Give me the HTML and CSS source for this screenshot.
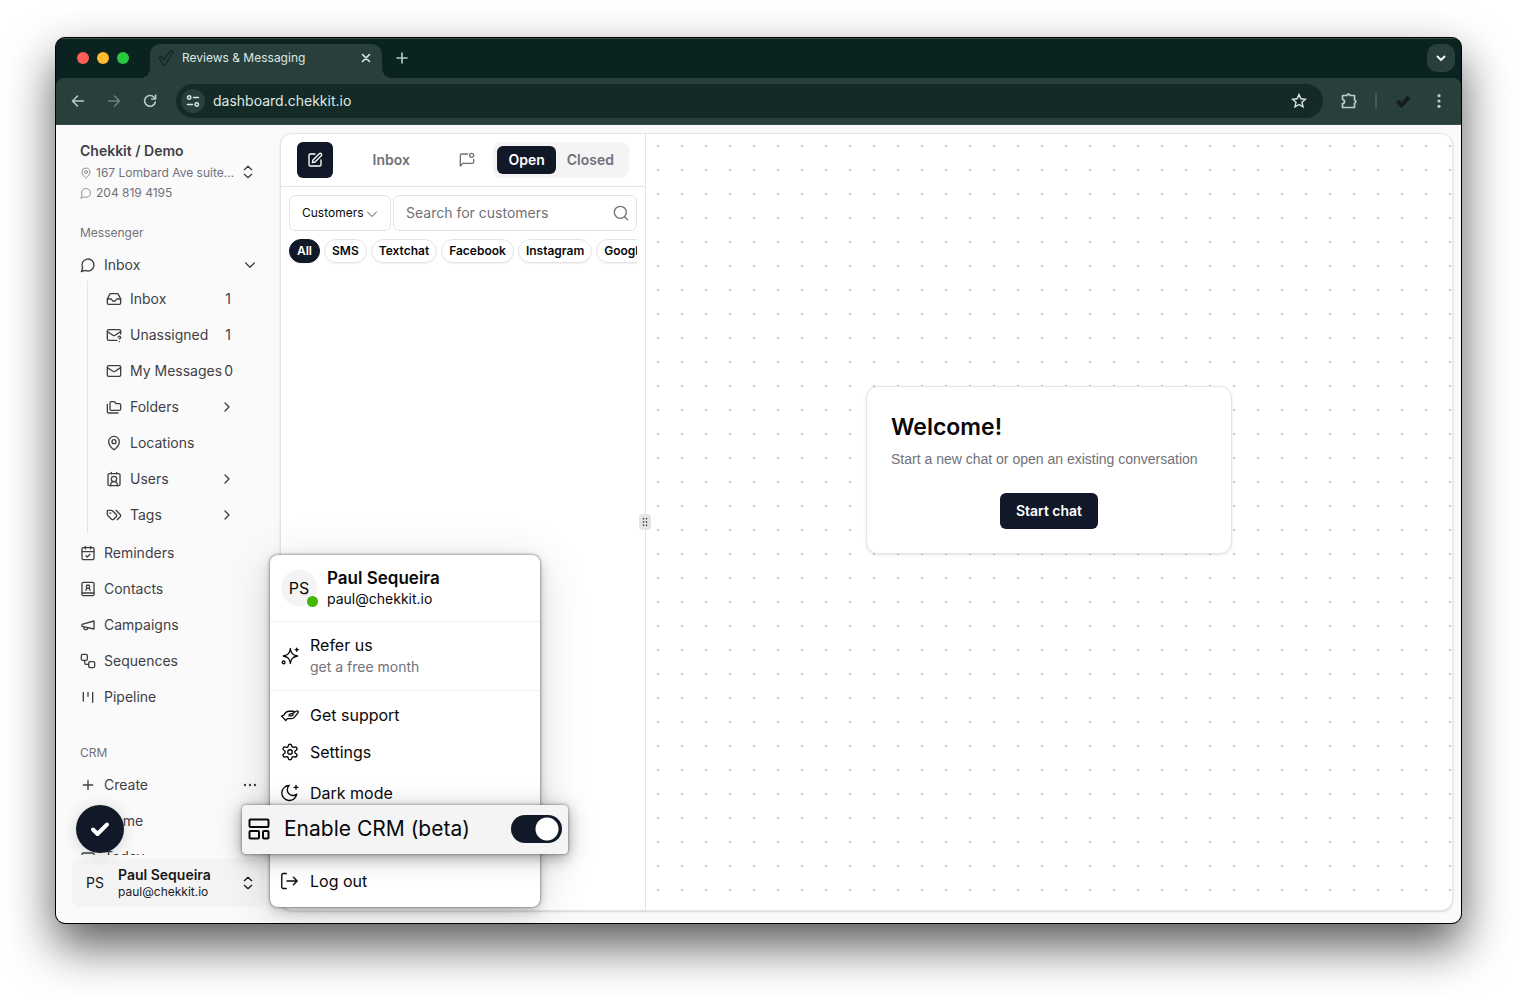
FILE: index.html
```html
<!DOCTYPE html>
<html lang="en">
<head>
    <meta charset="utf-8">
    <title>Reviews &amp; Messaging</title>
    <link rel="stylesheet" href="styles.css">
</head>
<body>

<div class="window">
    <div class="tab-strip">
        <div class="lights">
            <span class="light red"></span>
            <span class="light yellow"></span>
            <span class="light green"></span>
        </div>
        <div class="tab">
            <svg class="favicon" viewBox="0 0 16 16"><path d="M1 7.500l3-1 1.600 3.600L12 1.200h3.300L7.500 14.800H5z" fill="none" stroke="#14211f" stroke-width="1.200"/></svg>
            <span class="tab-title">Reviews &amp; Messaging</span>
            <button class="chrome-btn tab-close" aria-label="Close tab"><svg class="i16" viewBox="0 0 16 16"><path d="M4.500 4.500l7 7M11.500 4.500l-7 7" stroke-width="1.600"/></svg></button>
        </div>
        <button class="chrome-btn" aria-label="New tab"><svg class="i16" viewBox="0 0 16 16"><path d="M8 3v10M3 8h10" stroke-width="1.600"/></svg></button>
        <button class="chrome-btn tab-search" aria-label="Search tabs"><svg class="i16" viewBox="0 0 16 16"><path d="M4.500 6.500L8 10l3.500-3.500" stroke-width="1.800"/></svg></button>
    </div>

    <div class="toolbar">
        <button class="chrome-btn" aria-label="Back"><svg class="i16" viewBox="0 0 16 16"><path d="M13.500 8H2.500M7.500 3L2.500 8l5 5" stroke-width="1.600"/></svg></button>
        <button class="chrome-btn dim" aria-label="Forward"><svg class="i16" viewBox="0 0 16 16"><path d="M2.500 8h11M8.500 3l5 5-5 5" stroke-width="1.600"/></svg></button>
        <button class="chrome-btn" aria-label="Reload"><svg class="i16" viewBox="0 0 16 16"><path d="M13.300 9A5.400 5.400 0 1 1 12 4.200L13.500 5.700M13.600 2v4H9.600" stroke-width="1.600"/></svg></button>
        <div class="address">
            <span class="site-info"><svg class="i16" viewBox="0 0 16 16"><circle cx="4.200" cy="4.500" r="1.700"/><path d="M8.500 4.500H13.500M2.500 11.500h5"/><circle cx="11.800" cy="11.500" r="1.700"/></svg></span>
            <input class="url" type="text" aria-label="Address" value="dashboard.chekkit.io">
            <svg class="i16" viewBox="0 0 16 16"><path d="M8 1.500l1.900 4.300 4.600.4-3.500 3.100 1 4.600L8 11.500l-4 2.400 1-4.600-3.500-3.100 4.600-.4z" stroke-width="1.400" stroke-linejoin="miter"/></svg>
        </div>
        <button class="chrome-btn ext" aria-label="Extensions"><svg viewBox="0 0 18 18" width="18" height="18"><path d="M2.500 3.500h4.500a1.500 1.300 0 0 1 3 0h4.500v4.500a1.300 1.500 0 0 1 0 3v4.500h-12v-4a2 2 0 0 0 0-4z" stroke-width="1.700"/></svg></button>
        <span class="divider"></span>
        <svg class="check-ext" viewBox="0 0 18 18" width="18" height="18"><path d="M3.500 9l4 4.500L15 5" fill="none" stroke="#191b1d" stroke-width="4"/></svg>
        <button class="chrome-btn" aria-label="More"><svg class="i16" viewBox="0 0 16 16"><g fill="currentColor" stroke="none"><circle cx="8" cy="2.700" r="1.600"/><circle cx="8" cy="8" r="1.600"/><circle cx="8" cy="13.300" r="1.600"/></g></svg></button>
    </div>

    <div class="page">
        <nav class="sidebar">
            <button class="org">
                <span class="org-text">
                    <span class="org-name">Chekkit / Demo</span>
                    <span class="org-line"><svg viewBox="0 0 24 24" width="12" height="12"><path d="M20 10c0 5-5.500 10.200-7.400 11.800a1 1 0 0 1-1.200 0C9.500 20.200 4 15 4 10a8 8 0 0 1 16 0"/><circle cx="12" cy="10" r="3"/></svg>167 Lombard Ave suite…</span>
                    <span class="org-line"><svg viewBox="0 0 24 24" width="12" height="12"><path d="M7.900 20A9 9 0 1 0 4 16.100L2 22Z"/></svg>204 819 4195</span>
                </span>
                <svg class="i16" viewBox="0 0 24 24"><path d="M6.500 8.500L12 3.500l5.500 5M6.500 15.500l5.500 5 5.500-5"/></svg>
            </button>

            <div class="nav-scroll">
                <div class="nav-label">Messenger</div>
                <a class="nav-item" href="#"><svg class="i16" viewBox="0 0 24 24"><path d="M7.900 20A9 9 0 1 0 4 16.100L2 22Z"/></svg>Inbox
                    <svg class="i16 end" viewBox="0 0 24 24"><path d="M5.500 9l6.500 6.500L18.500 9"/></svg></a>
                <div class="sub-nav">
                    <a class="nav-item" href="#"><svg class="i16" viewBox="0 0 24 24"><path d="M22 12h-6l-2 3h-4l-2-3H2"/><path d="M5.500 5.100L2 12v6a2 2 0 0 0 2 2h16a2 2 0 0 0 2-2v-6l-3.500-6.900A2 2 0 0 0 16.800 4H7.200a2 2 0 0 0-1.700 1.100z"/></svg>Inbox<span class="count">1</span></a>
                    <a class="nav-item" href="#"><svg class="i16" viewBox="0 0 24 24"><path d="M22 10.500V6a2 2 0 0 0-2-2H4a2 2 0 0 0-2 2v12c0 1.100.9 2 2 2h12.500"/><path d="M22 7l-9 5.700a2 2 0 0 1-2.100 0L2 7M18 15.300c.2-.4.500-.8.900-1a2.100 2.100 0 0 1 2.600.3c.3.400.500.900.500 1.300 0 1.300-2 2-2 2M20 22v0"/></svg>Unassigned<span class="count">1</span></a>
                    <a class="nav-item" href="#"><svg class="i16" viewBox="0 0 24 24"><rect x="2" y="4" width="20" height="16" rx="2"/><path d="M22 7l-9 5.700a2 2 0 0 1-2.100 0L2 7"/></svg>My Messages<span class="count">0</span></a>
                    <a class="nav-item" href="#"><svg class="i16" viewBox="0 0 24 24"><path d="M20 17a2 2 0 0 0 2-2V9a2 2 0 0 0-2-2h-3.900a2 2 0 0 1-1.700-.9l-.8-1.200A2 2 0 0 0 11.900 4H8a2 2 0 0 0-2 2v9a2 2 0 0 0 2 2Z"/><path d="M2 8v11a2 2 0 0 0 2 2h14"/></svg>Folders<svg class="i16 end" viewBox="0 0 24 24"><path d="M9 18l6-6-6-6"/></svg></a>
                    <a class="nav-item" href="#"><svg class="i16" viewBox="0 0 24 24"><path d="M20 10c0 5-5.500 10.200-7.400 11.800a1 1 0 0 1-1.200 0C9.500 20.200 4 15 4 10a8 8 0 0 1 16 0"/><circle cx="12" cy="10" r="3"/></svg>Locations</a>
                    <a class="nav-item" href="#"><svg class="i16" viewBox="0 0 24 24"><path d="M16 2v2M8 2v2M17 22v-1a5 5 0 0 0-10 0v1"/><circle cx="12" cy="12" r="4"/><rect x="3" y="4" width="18" height="18" rx="2"/></svg>Users<svg class="i16 end" viewBox="0 0 24 24"><path d="M9 18l6-6-6-6"/></svg></a>
                    <a class="nav-item" href="#"><svg class="i16" viewBox="0 0 24 24"><path d="M15 5l6.300 6.300a2.400 2.400 0 0 1 0 3.400L17 19"/><path d="M9.600 5.600A2 2 0 0 0 8.200 5H3a1 1 0 0 0-1 1v5.200a2 2 0 0 0 .6 1.400l5.700 5.700a2.400 2.400 0 0 0 3.400 0l3.600-3.600a2.400 2.400 0 0 0 0-3.400z"/><circle cx="6.500" cy="9.500" r=".5"/></svg>Tags<svg class="i16 end" viewBox="0 0 24 24"><path d="M9 18l6-6-6-6"/></svg></a>
                </div>
                <a class="nav-item" href="#"><svg class="i16" viewBox="0 0 24 24"><path d="M8 2v4M16 2v4M3 10h18M9 16l2 2 4-4"/><rect x="3" y="4" width="18" height="18" rx="2"/></svg>Reminders</a>
                <a class="nav-item" href="#"><svg class="i16" viewBox="0 0 24 24"><rect x="3" y="2" width="18" height="20" rx="2"/><path d="M3 18h18M15 14a3 3 0 1 0-6 0"/><circle cx="12" cy="8.500" r="2.500"/></svg>Contacts</a>
                <a class="nav-item" href="#"><svg class="i16" viewBox="0 0 24 24"><path d="M3 11l18-5v12L3 14v-3zM11.600 16.800a3 3 0 1 1-5.800-1.600"/></svg>Campaigns</a>
                <a class="nav-item" href="#"><svg class="i16" viewBox="0 0 24 24"><rect x="2" y="2" width="9" height="9" rx="2"/><path d="M7 11v4a2 2 0 0 0 2 2h4"/><rect x="13" y="13" width="9" height="9" rx="2"/></svg>Sequences</a>
                <a class="nav-item" href="#"><svg class="i16" viewBox="0 0 24 24"><path d="M5 5v13M12 5v6M19 5v15"/></svg>Pipeline</a>

                <div class="nav-label crm">CRM</div>
                <a class="nav-item" href="#"><svg class="i16" viewBox="0 0 24 24"><path d="M5 12h14M12 5v14"/></svg>Create
                    <svg class="i16 end" viewBox="0 0 24 24"><g fill="currentColor"><circle cx="4.500" cy="12" r=".8"/><circle cx="12" cy="12" r=".8"/><circle cx="19.500" cy="12" r=".8"/></g></svg></a>
                <a class="nav-item" href="#"><svg class="i16" viewBox="0 0 24 24"><path d="M3 10l9-7 9 7v11H3z"/></svg>Home</a>
                <a class="nav-item" href="#"><svg class="i16" viewBox="0 0 24 24"><rect x="3" y="6" width="18" height="16" rx="2"/></svg>Today</a>
            </div>

            <button class="user-btn">
                <span class="initials">PS</span>
                <span class="user-text"><b>Paul Sequeira</b><span>paul@chekkit.io</span></span>
                <svg class="i16" viewBox="0 0 24 24"><path d="M6.500 8.500L12 3.500l5.500 5M6.500 15.500l5.500 5 5.500-5"/></svg>
            </button>
        </nav>

        <main class="panel">
            <section class="chats">
                <header class="chats-head">
                    <button class="compose" aria-label="New message"><svg class="i16" viewBox="0 0 24 24"><path d="M12 3H5a2 2 0 0 0-2 2v14a2 2 0 0 0 2 2h14a2 2 0 0 0 2-2v-7"/><path d="M18.400 2.600a2.100 2.100 0 0 1 3 3L12 15l-4 1 1-4Z"/></svg></button>
                    <h1>Inbox</h1>
                    <button class="unread" aria-label="Unread only"><svg class="i16" viewBox="0 0 24 24"><path d="M13 3H4a2 2 0 0 0-2 2v16l4-4h14a2 2 0 0 0 2-2v-4"/><circle cx="19" cy="5" r="3"/></svg></button>
                    <div class="segment">
                        <button class="active">Open</button>
                        <button>Closed</button>
                    </div>
                </header>
                <div class="filters">
                    <div class="kind">
                        <select aria-label="Search type"><option>Customers</option></select>
                        <svg viewBox="0 0 24 24" width="12" height="12"><path d="M3 8l9 9 9-9"/></svg>
                    </div>
                    <div class="search">
                        <input type="text" aria-label="Search" placeholder="Search for customers">
                        <svg class="i16" viewBox="0 0 24 24"><circle cx="11" cy="11" r="9"/><path d="M22 22l-4.500-4.500"/></svg>
                    </div>
                </div>
                <div class="pills">
                    <button class="pill on">All</button>
                    <button class="pill">SMS</button>
                    <button class="pill">Textchat</button>
                    <button class="pill">Facebook</button>
                    <button class="pill">Instagram</button>
                    <button class="pill">Google</button>
                </div>
            </section>
            <section class="canvas">
                <span class="grip"><svg viewBox="0 0 10 10" width="10" height="10"><g fill="#18181b" stroke="none"><circle cx="3.500" cy="1.700" r=".8"/><circle cx="3.500" cy="5" r=".8"/><circle cx="3.500" cy="8.300" r=".8"/><circle cx="6.500" cy="1.700" r=".8"/><circle cx="6.500" cy="5" r=".8"/><circle cx="6.500" cy="8.300" r=".8"/></g></svg></span>
                <div class="welcome">
                    <h2>Welcome!</h2>
                    <p>Start a new chat or open an existing conversation</p>
                    <button class="start">Start chat</button>
                </div>
            </section>
        </main>

        <button class="chat-bubble" aria-label="Open chat"><svg viewBox="0 0 20 20" width="20" height="20"><path d="M3 10.500L7.500 15 17 5.500" stroke="#fff" stroke-width="4"/></svg></button>

        <div class="menu">
            <div class="menu-user">
                <span class="avatar">PS<i class="online"></i></span>
                <span class="menu-user-text"><b>Paul Sequeira</b><span>paul@chekkit.io</span></span>
            </div>
            <a class="refer" href="#">
                <svg class="i18" viewBox="0 0 24 24"><path d="M12.500 2c1 6.500 2.500 8.500 9.500 10-7 1.500-8.500 3.500-9.500 10-1-6.500-2.500-8.500-9.500-10 7-1.500 8.500-3.500 9.500-10zM21 1.500v4M23 3.500h-4"/><circle cx="3.500" cy="20.500" r="1.800"/></svg>
                <span>Refer us<small>get a free month</small></span>
            </a>
            <div class="menu-list">
                <a class="menu-item" href="#"><svg class="i18 hand" viewBox="0 0 24 24"><path d="M.8 13.500L4 12c1.500-3 3.500-5 7-5h5c1.800 0 2 2 .3 2.600L11 11.300M15.500 10l4.500-3c2-1.200 3.800.6 2.600 2.200l-4.600 5.600c-1.300 1.500-2.500 2-4.500 2H8.500L6.500 19M.8 13.500L6.500 19.500M10.500 13.200h3.500l2.500-1.500"/></svg>Get support</a>
                <a class="menu-item" href="#"><svg class="i18" viewBox="0 0 24 24"><path d="M9.700 3.600a2.350 2.350 0 0 1 4.600 0 2.300 2.300 0 0 0 3.400 2 2.350 2.350 0 0 1 2.400 4.100 2.400 2.400 0 0 0 0 4.600 2.350 2.350 0 0 1-2.400 4.100 2.300 2.300 0 0 0-3.400 2 2.350 2.350 0 0 1-4.600 0 2.300 2.300 0 0 0-3.400-2 2.350 2.350 0 0 1-2.400-4.100 2.400 2.400 0 0 0 0-4.600 2.350 2.350 0 0 1 2.400-4.100 2.300 2.300 0 0 0 3.400-2"/><circle cx="12" cy="12" r="3"/></svg>Settings</a>
                <a class="menu-item dark" href="#"><svg class="i18" viewBox="0 0 24 24"><path d="M11 2a7.500 7.500 0 0 0 10 11.500A10 10 0 1 1 11 2M20 2v5M22.500 4.500h-5"/></svg>Dark mode</a>
                <label class="crm-toggle">
                    <svg viewBox="0 0 24 24" width="24" height="24"><rect x="2.500" y="2.500" width="19" height="7.500" rx="1"/><rect x="2.500" y="14" width="9.500" height="7.500" rx="1"/><rect x="16" y="14" width="5.500" height="7.500" rx="1"/></svg>
                    <span>Enable CRM (beta)</span>
                    <input type="checkbox" role="switch" checked>
                </label>
                <a class="menu-item logout" href="#"><svg class="i18" viewBox="0 0 24 24"><path d="M7 22H3a2 2 0 0 1-2-2V4a2 2 0 0 1 2-2h4M16.500 17l5-5-5-5M21.500 12H8"/></svg>Log out</a>
            </div>
        </div>
    </div>
</div>

</body>
</html>
```

FILE: styles.css
```css
* {
    box-sizing: border-box;
}
body {
    margin: 0;
    padding: 37px 55px 73px;
    height: 100vh;
    background: #fff;
    font-family: Inter, "Liberation Sans", sans-serif;
    font-size: 14px;
    line-height: 20px;
    color: #3f3f46;
    overflow: hidden;
}
button, input, select {
    font: inherit;
    color: inherit;
    border: 0;
    padding: 0;
    margin: 0;
    background: none;
}
a {
    color: inherit;
    text-decoration: none;
}
h1, h2, p {
    margin: 0;
}
svg {
    flex: none;
    fill: none;
    stroke: currentColor;
    stroke-width: 2;
    stroke-linecap: round;
    stroke-linejoin: round;
}
.i16 {
    width: 16px;
    height: 16px;
}
.i18 {
    width: 18px;
    height: 18px;
}

/* browser window */
.window {
    height: 100%;
    display: flex;
    flex-direction: column;
    border: 1px solid #000;
    border-radius: 10px;
    overflow: hidden;
    background: #0b2320;
    box-shadow: 0 22px 48px rgba(0, 0, 0, .65);
}
.tab-strip {
    display: flex;
    align-items: center;
    height: 40px;
    padding: 0 6px 0 21px;
    color: #dfe8e5;
    box-shadow: inset 0 1px #3b504c;
}
.lights {
    display: flex;
    gap: 8px;
    margin-right: 21px;
}
.light {
    width: 12px;
    height: 12px;
    border-radius: 50%;
}
.red { background: #ff5f57; }
.yellow { background: #febc2e; }
.green { background: #28c840; }
.chrome-btn {
    display: flex;
    align-items: center;
    justify-content: center;
    color: #b5cdc8;
}
.dim {
    color: #6d807c;
}
.tab {
    position: relative;
    display: flex;
    align-items: center;
    align-self: flex-end;
    width: 232px;
    height: 34px;
    padding: 0 8px 6px;
    margin-right: 12px;
    border-radius: 10px 10px 0 0;
    background: #293f3b;
    font-size: 12px;
}
.tab::before, .tab::after {
    content: "";
    position: absolute;
    bottom: 0;
    width: 10px;
    height: 10px;
}
.tab::before {
    left: -10px;
    background: radial-gradient(circle at 0 0, transparent 10px, #293f3b 10px);
}
.tab::after {
    right: -10px;
    background: radial-gradient(circle at 100% 0, transparent 10px, #293f3b 10px);
}
.favicon {
    width: 16px;
    height: 16px;
    margin-right: 8px;
}
.tab-close {
    margin-left: auto;
    color: #dfe8e5;
}
.tab-search {
    width: 28px;
    height: 28px;
    margin-left: auto;
    border-radius: 10px;
    background: #293f3b;
    color: #fff;
}
.toolbar {
    display: flex;
    align-items: center;
    height: 47px;
    padding: 0 14px;
    gap: 20px;
    border-radius: 8px 8px 0 0;
    background: #293f3b;
    border-bottom: 1px solid #3a504c;
}
.address {
    flex: 1;
    display: flex;
    align-items: center;
    height: 34px;
    margin-left: -2px;
    padding: 0 16px 0 5px;
    border-radius: 17px;
    background: #132a26;
    color: #dfe8e5;
}
.site-info {
    display: flex;
    align-items: center;
    justify-content: center;
    width: 24px;
    height: 24px;
    margin-right: 8px;
    border-radius: 50%;
    background: #293f3b;
}
.site-info svg {
    stroke-width: 1.5;
}
.url {
    flex: 1;
}
.ext {
    margin: 0 -1px 0 -3px;
}
.divider {
    width: 2px;
    height: 16px;
    margin: 0 -2px;
    background: #435a56;
}
.check-ext {
    margin: 0 -1px;
    stroke-linecap: butt;
}

/* app */
.page {
    position: relative;
    flex: 1;
    display: flex;
    min-height: 0;
    background: #fafafa;
}
.sidebar {
    display: flex;
    flex-direction: column;
    width: 224px;
    padding: 16px;
}
.org {
    display: flex;
    align-items: center;
    justify-content: space-between;
    padding: 0 8px;
    margin-bottom: 14px;
    text-align: left;
}
.org-text {
    display: flex;
    flex-direction: column;
}
.org-name {
    margin-bottom: 2px;
    font-weight: 600;
}
.org-line {
    display: flex;
    align-items: center;
    gap: 4px;
    font-size: 12px;
    color: #71717a;
    white-space: nowrap;
}
.org-line svg {
    stroke-width: 1.5;
}
.nav-scroll {
    flex: 1;
    min-height: 0;
    overflow: hidden;
    margin-bottom: 4px;
}
.nav-label {
    padding: 0 8px;
    font-size: 12px;
    line-height: 32px;
    color: #71717a;
}
.crm {
    margin-top: 24px;
}
.nav-item {
    display: flex;
    align-items: center;
    height: 32px;
    padding: 0 6px 0 8px;
    margin-bottom: 4px;
    white-space: nowrap;
}
.nav-item svg:first-child {
    margin-right: 8px;
}
.end, .count {
    margin-left: auto;
}
.sub-nav {
    margin: -4px 24px 4px 15px;
    padding: 2px 0 0 10px;
    border-left: 1px solid #e4e4e7;
}
.sub-nav .nav-item {
    padding: 0 5px 0 8px;
}
.sub-nav .nav-item:last-child {
    margin-bottom: 0;
    height: 34px;
    padding-bottom: 2px;
}
.count {
    width: 14px;
    text-align: center;
}
.user-btn {
    display: flex;
    align-items: center;
    height: 48px;
    padding: 0 8px;
    border-radius: 8px;
    background: #f4f4f5;
    color: #18181b;
    text-align: left;
}
.initials {
    width: 30px;
    text-align: center;
}
.user-text {
    flex: 1;
    display: flex;
    flex-direction: column;
    margin-left: 8px;
    font-size: 12px;
    line-height: 16px;
}
.user-text b {
    font-size: 14px;
    line-height: 18px;
    font-weight: 600;
}
.panel {
    flex: 1;
    display: flex;
    margin: 8px 8px 12px 0;
    border: 1px solid #e4e4e7;
    border-radius: 12px;
    background: #fff;
    box-shadow: 0 1px 2px rgba(0, 0, 0, .15);
}
.chats {
    width: 364px;
}
.chats-head {
    display: flex;
    align-items: center;
    justify-content: space-between;
    height: 53px;
    padding: 0 16px;
    border-bottom: 1px solid #e4e4e7;
    color: #71717a;
}
.compose {
    display: grid;
    place-items: center;
    width: 36px;
    height: 36px;
    border-radius: 6px;
    background: #111827;
    color: #fff;
}
.chats-head h1 {
    flex: 1;
    padding-right: 10px;
    text-align: center;
    font-size: 14px;
    font-weight: 600;
}
.unread {
    display: flex;
    margin-right: 18px;
}
.segment {
    display: flex;
    padding: 4px;
    border-radius: 8px;
    background: #f4f4f5;
}
.segment button {
    height: 28px;
    padding: 0 11px;
    border-radius: 6px;
    font-weight: 600;
}
.segment .active {
    background: #111827;
    color: #fff;
}
.filters {
    display: flex;
    gap: 2px;
    padding: 8px;
}
.kind, .search {
    position: relative;
    height: 36px;
    border: 1px solid #e4e4e7;
    border-radius: 6px;
}
.kind {
    flex: none;
    width: 102px;
    color: #09090b;
}
.kind select {
    width: 100%;
    height: 100%;
    padding-left: 12px;
    appearance: none;
    font-size: 12px;
}
.kind svg {
    position: absolute;
    top: 12px;
    right: 12px;
    stroke-width: 1.5;
    pointer-events: none;
}
.search {
    flex: 1;
    display: flex;
    align-items: center;
    min-width: 0;
    padding: 0 7px 0 12px;
    color: #71717a;
}
.search input {
    flex: 1;
    min-width: 0;
}
.search input::placeholder {
    color: #71717a;
}
.pills {
    display: flex;
    gap: 4px;
    margin: 0 8px;
    overflow: hidden;
    padding-bottom: 2px;
}
.pill {
    flex: none;
    height: 24px;
    padding: 0 7px;
    border: 1px solid #e4e4e7;
    border-radius: 12px;
    font-size: 12px;
    line-height: 16px;
    font-weight: 600;
    color: #09090b;
    box-shadow: 0 1px 1px rgba(0, 0, 0, .06);
}
.pill.on {
    background: #111827;
    border-color: #111827;
    color: #fff;
}
.canvas {
    position: relative;
    flex: 1;
    display: flex;
    align-items: center;
    justify-content: center;
    padding-bottom: 104px;
    border-left: 1px solid #e4e4e7;
    border-radius: 0 12px 12px 0;
    background: radial-gradient(circle, #c4c4c8 1px, transparent 1px) 0 0 / 24px 24px;
}
.grip {
    position: absolute;
    top: 50%;
    left: -7px;
    display: grid;
    place-items: center;
    width: 12px;
    height: 16px;
    margin-top: -8px;
    border-radius: 4px;
    background: #e4e4e7;
}
.welcome {
    display: flex;
    flex-direction: column;
    min-width: 366px;
    padding: 24px;
    border: 1px solid #e4e4e7;
    border-radius: 12px;
    background: #fff;
    box-shadow: 0 1px 3px rgba(0, 0, 0, .1);
}
.welcome h2 {
    font-size: 23px;
    line-height: 32px;
    font-weight: 600;
    color: #09090b;
}
.welcome p {
    margin: 6px 0 24px;
    font-family: "Liberation Sans", sans-serif;
    color: #71717a;
}
.start {
    align-self: center;
    height: 36px;
    padding: 0 16px;
    border-radius: 6px;
    background: #111827;
    color: #fff;
    font-weight: 600;
}
.chat-bubble {
    position: absolute;
    left: 20px;
    bottom: 70px;
    display: grid;
    place-items: center;
    width: 48px;
    height: 48px;
    border-radius: 50%;
    background: #111827;
    box-shadow: 0 2px 16px rgba(0, 0, 0, .15);
}

/* account menu */
.menu {
    position: absolute;
    left: 214px;
    bottom: 16px;
    width: 270px;
    border-radius: 8px;
    background: #fff;
    color: #09090b;
    font-size: 16px;
    line-height: 22px;
    box-shadow: 0 0 3px rgba(0, 0, 0, .6), 0 4px 12px rgba(0, 0, 0, .2), 0 8px 48px rgba(0, 0, 0, .15);
}
.menu .i18 {
    stroke-width: 1.8;
}
.menu-user {
    display: flex;
    align-items: center;
    gap: 10px;
    height: 67px;
    padding: 0 11px;
    border-bottom: 1px solid #f0f0f1;
}
.avatar {
    position: relative;
    width: 36px;
    border-radius: 50%;
    background: #f4f4f5;
    line-height: 36px;
    text-align: center;
}
.online {
    position: absolute;
    right: -1px;
    bottom: -1px;
    width: 11px;
    height: 11px;
    border-radius: 50%;
    background: #44b700;
}
.menu-user-text {
    display: flex;
    flex-direction: column;
    font-size: 14px;
    line-height: 20px;
}
.menu-user-text b {
    font-size: 17px;
    line-height: 22px;
    font-weight: 600;
}
.refer, .menu-item {
    display: flex;
    align-items: center;
    gap: 11px;
    padding: 0 11px;
}
.refer {
    height: 69px;
    border-bottom: 1px solid #f0f0f1;
}
.refer small {
    display: block;
    font-size: 14px;
    color: #71717a;
}
.menu-list {
    padding: 5px 0 8px;
}
.menu-item {
    height: 37px;
}
.dark {
    margin-top: 4px;
}
.crm-toggle {
    position: relative;
    display: flex;
    align-items: center;
    gap: 13px;
    height: 49px;
    margin: -6px -28px 8px;
    padding: 0 6px 2px 5px;
    border-radius: 4px;
    background: #f4f4f5;
    font-size: 21px;
    box-shadow: 0 0 3px rgba(0, 0, 0, .5), 0 4px 14px rgba(0, 0, 0, .3), 0 4px 32px rgba(0, 0, 0, .15);
}
.crm-toggle input {
    appearance: none;
    width: 51px;
    height: 28px;
    margin: 0 0 0 auto;
    border-radius: 14px;
    background: radial-gradient(circle at 36px 14px, #fff 11px, #111827 12px);
}
```
